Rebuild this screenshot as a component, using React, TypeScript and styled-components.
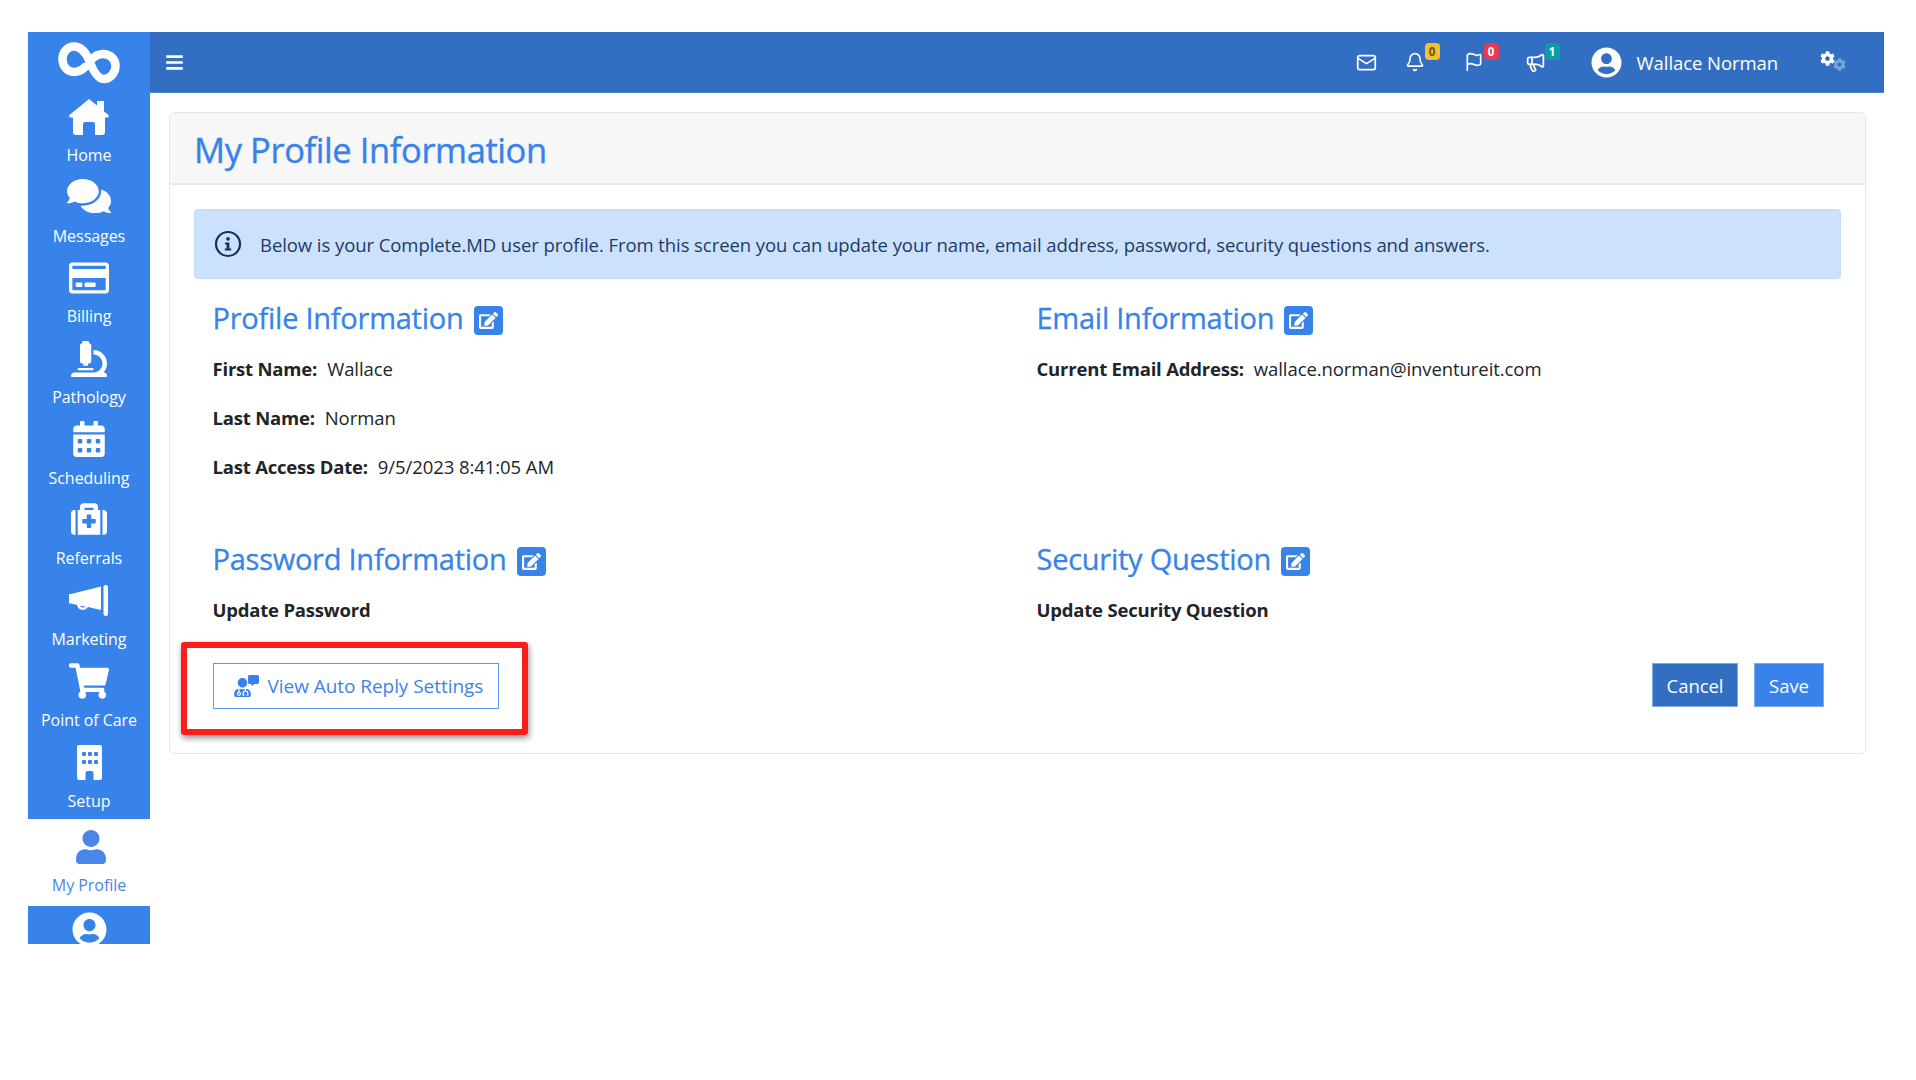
import React from "react";
import styled, { createGlobalStyle } from "styled-components";
import {
  FaComments, FaRegCreditCard, FaMicroscope, FaCalendarAlt, FaMedkit,
  FaShoppingCart, FaUser, FaUserCircle, FaBars, FaCog, FaEdit, FaUserMd, FaCommentAlt,
} from "react-icons/fa";
import { Mail, Bell, Flag, Megaphone } from "lucide-react";

const Global = createGlobalStyle`
  html, body { margin: 0; padding: 0; background: #fff; }
  body { font-family: "Open Sans", "Noto Sans", sans-serif; color: #212529; }
`;

const Page = styled.div`
  display: flex;
  align-items: flex-start;
  padding: 32px 32px 0 28px;
  height: 1080px;
  box-sizing: border-box;
`;
const Sidebar = styled.nav`
  width: 122px;
  flex: none;
  height: 912px;
  overflow: hidden;
  background: #3783e9;
  display: flex;
  flex-direction: column;
`;
const LogoBox = styled.div`
  height: 61px;
  flex: none;
  display: flex;
  align-items: center;
  justify-content: center;
`;
const NavItem = styled.a<{ $active?: boolean }>`
  display: flex;
  flex-direction: column;
  align-items: center;
  flex: none;
  height: ${(p) => (p.$active ? "87px" : "80.7px")};
  box-sizing: border-box;
  padding-top: ${(p) => (p.$active ? "7px" : "3px")};
  background: ${(p) => (p.$active ? "#fff" : "#3783e9")};
  color: ${(p) => (p.$active ? "#4a86e8" : "#fff")};
`;
const NavIcon = styled.span<{ $dx?: number; $lift?: number }>`
  height: 42px;
  display: flex;
  align-items: center;
  justify-content: center;
  margin-left: ${(p) => p.$dx ?? 0}px;
  padding-bottom: ${(p) => p.$lift ?? 0}px;
  box-sizing: border-box;
`;
const NavLabel = styled.span`
  margin-top: 5px;
  font-size: 16px;
  line-height: 24px;
  letter-spacing: -0.05px;
  white-space: nowrap;
`;
const BottomAvatar = styled.div`
  display: flex;
  justify-content: center;
  padding-top: 6px;
  color: #fff;
`;
const Main = styled.div`
  flex: 1;
  min-width: 0;
`;
const TopBar = styled.header`
  height: 61px;
  background: #326fc2;
  border-bottom: 1px solid #4d86d4;
  box-sizing: border-box;
  display: flex;
  align-items: center;
  color: #fff;
  padding: 0 38px 0 15px;
`;
const Burger = styled.span`
  display: flex;
  margin-right: auto;
`;
const TopIcon = styled.span<{ $w: number }>`
  position: relative;
  width: ${(p) => p.$w}px;
  display: flex;
  align-items: center;
`;
const Badge = styled.span<{ $bg: string; $fg: string }>`
  position: absolute;
  left: 20px;
  top: -9px;
  min-width: 15px;
  height: 17px;
  border-radius: 4px;
  background: ${(p) => p.$bg};
  color: ${(p) => p.$fg};
  font-size: 11.5px;
  font-weight: 700;
  line-height: 17px;
  text-align: center;
`;
const UserName = styled.span`
  font-size: 18.5px;
  letter-spacing: -0.07px;
  margin: 0 42px 0 15px;
  white-space: nowrap;
`;
const Gears = styled.span`
  display: flex;
  align-items: flex-start;
  width: 26px;
  height: 22px;
`;
const GearBack = styled.span`
  color: #79a3dc;
  display: flex;
  margin: 7px 0 0 -2px;
`;
const Card = styled.section`
  margin: 19px 0 0 19px;
  width: 1697px;
  height: 642px;
  box-sizing: border-box;
  border: 1px solid #e6e6e6;
  border-radius: 5px;
  display: flex;
  flex-direction: column;
`;
const CardHead = styled.div`
  height: 72px;
  flex: none;
  box-sizing: border-box;
  background: #f7f7f7;
  border-bottom: 2px solid #e9e9e9;
  border-radius: 5px 5px 0 0;
  padding: 2px 0 0 24px;
  display: flex;
  align-items: center;
`;
const Title = styled.h1`
  margin: 0;
  color: #3783e9;
  font-size: 34.5px;
  font-weight: 400;
  letter-spacing: -0.4px;
  -webkit-text-stroke: 0.4px #3783e9;
`;
const CardBody = styled.div`
  padding: 24px 24px 0 24px;
  display: flex;
  flex-direction: column;
  flex: 1;
`;
const Alert = styled.div`
  height: 70px;
  box-sizing: border-box;
  background: #cce2fc;
  border: 1px solid #c2dcfb;
  border-radius: 4px;
  display: flex;
  align-items: center;
  padding: 0 19px;
  gap: 18px;
  color: #1f3a66;
  font-size: 18.5px;
  letter-spacing: -0.07px;
  white-space: nowrap;
`;
const Columns = styled.div`
  display: grid;
  grid-template-columns: 824px 1fr;
  padding: 0 0 0 18.5px;
  margin-top: 17px;
`;
const Block = styled.div<{ $h: number }>`
  height: ${(p) => p.$h}px;
`;
const SectionTitle = styled.h2`
  margin: 0;
  height: 42px;
  display: flex;
  align-items: center;
  gap: 10px;
  color: #3783e9;
  font-size: 29px;
  font-weight: 400;
  letter-spacing: -0.25px;
  -webkit-text-stroke: 0.3px #3783e9;
  white-space: nowrap;
`;
const EditBtn = styled.span`
  width: 29px;
  height: 29px;
  margin-top: 6px;
  border-radius: 4px;
  background: #3783e9;
  color: #fff;
  -webkit-text-stroke: 0;
  display: flex;
  align-items: center;
  justify-content: center;
`;
const Row = styled.p`
  margin: 15px 0 0;
  height: 32px;
  line-height: 32px;
  font-size: 18.5px;
  letter-spacing: -0.07px;
  white-space: nowrap;
  & + & { margin-top: 17px; }
  b { font-weight: 700; margin-right: 10px; letter-spacing: -0.2px; }
`;
const Footer = styled.div`
  display: flex;
  justify-content: space-between;
  align-items: flex-start;
  padding: 1px 17px 0 18.5px;
`;
const Highlighted = styled.div`
  position: relative;
`;
const RedBox = styled.div`
  position: absolute;
  left: -32px;
  top: -21px;
  width: 347px;
  height: 93px;
  box-sizing: border-box;
  border: 6px solid #fb1c1c;
  border-radius: 3px;
  box-shadow: 1px 3px 6px rgba(0, 0, 0, 0.45);
  pointer-events: none;
`;
const AutoReply = styled.button`
  width: 286px;
  height: 46px;
  box-sizing: border-box;
  background: #fff;
  border: 1px solid #5b9bf0;
  color: #3f82e6;
  font: 400 19px "Open Sans", sans-serif;
  letter-spacing: -0.05px;
  display: flex;
  align-items: center;
  gap: 9px;
  padding: 0 0 0 19px;
  white-space: nowrap;
`;
const DocIcon = styled.span`
  position: relative;
  width: 26px;
  height: 22px;
  display: flex;
  align-items: flex-end;
  color: #3783e9;
`;
const Bubble = styled.span`
  position: absolute;
  right: 0;
  top: 0;
  display: flex;
`;
const Actions = styled.div`
  display: flex;
  gap: 16px;
`;
const ActionBtn = styled.button<{ $bg: string; $w: number }>`
  width: ${(p) => p.$w}px;
  height: 44px;
  background: ${(p) => p.$bg};
  color: #fff;
  border: 1px solid #7fa9e8;
  font: 400 18.5px "Open Sans", sans-serif;
  letter-spacing: -0.07px;
`;

const Logo = () => (
  <svg width="62" height="42" viewBox="0 0 62 42" fill="none" stroke="#fff" strokeWidth="8.5" strokeLinecap="round">
    <path d="M27 25 C23 29 20 30 16 30 C9 30 4.5 24 4.5 17 C4.5 10 9.5 4.5 16 4.5 C24 4.5 28 11 31 18 C34 26 39 37 46 37 C52 37 57.5 31 57.5 24 C57.5 17 52 12 45 12 C41 12 37 14 34 17" />
  </svg>
);

const HomeIcon = () => (
  <svg width="40" height="36" viewBox="0 0 40 36" fill="#fff">
    <path d="M20 0 L28 6.5 V2 H35 V12.5 L39.5 16 Q40.5 17.5 39 18.5 H36 V33 Q36 36 33 36 H26 V25 Q26 23 24 23 H16 Q14 23 14 25 V36 H7 Q4 36 4 33 V18.5 H1 Q-0.5 17.5 0.5 16 Z" />
  </svg>
);

const HornIcon = () => (
  <svg width="40" height="32" viewBox="0 0 40 32" fill="#fff">
    <path d="M0 9 L2 9 L32 1.5 V25 L19 22 A6 6 0 0 1 8 20 L2 18.5 H0 Z M11 20.7 A3.4 3.4 0 0 0 16.5 21.4 Z" fillRule="evenodd" />
    <rect x="34.5" y="0" width="4.5" height="31" rx="2.2" />
  </svg>
);

const BuildingIcon = () => (
  <svg width="25" height="35" viewBox="0 0 25 35">
    <path fill="#fff" d="M2 0 H23 Q25 0 25 2 V33 Q25 35 23 35 H16.5 V28 Q16.5 26 14.5 26 H10.5 Q8.5 26 8.5 28 V35 H2 Q0 35 0 33 V2 Q0 0 2 0 Z" />
    {[5, 11, 17].map((x) =>
      [7, 15].map((y) => <rect key={`${x}-${y}`} x={x} y={y} width="4" height="4" rx="1" fill="#3783e9" />)
    )}
  </svg>
);

const InfoIcon = () => (
  <svg width="28" height="28" viewBox="0 0 28 28" fill="none">
    <circle cx="14" cy="14" r="12" stroke="#16305c" strokeWidth="2.2" />
    <circle cx="14" cy="8.8" r="1.9" fill="#16305c" />
    <path d="M11 12.4 H15.4 V18.4 H17.2 V20.4 H10.8 V18.4 H12.6 V14.4 H11 Z" fill="#16305c" />
  </svg>
);

const items = [
  { label: "Home", icon: <HomeIcon />, lift: 1 },
  { label: "Messages", icon: <FaComments size={44} />, lift: 4 },
  { label: "Billing", icon: <FaRegCreditCard size={40} />, lift: 1 },
  { label: "Pathology", icon: <FaMicroscope size={36} />, lift: 1 },
  { label: "Scheduling", icon: <FaCalendarAlt size={36} />, lift: 2 },
  { label: "Referrals", icon: <FaMedkit size={36} />, lift: 2 },
  { label: "Marketing", icon: <HornIcon />, lift: 0 },
  { label: "Point of Care", icon: <FaShoppingCart size={40} />, lift: 2 },
  { label: "Setup", icon: <BuildingIcon />, lift: 1 },
];

const Section = ({ title }: { title: string }) => (
  <SectionTitle>
    {title}
    <EditBtn><FaEdit size={19} /></EditBtn>
  </SectionTitle>
);

export default function App() {
  return (
    <>
      <Global />
      <Page>
        <Sidebar>
          <LogoBox><Logo /></LogoBox>
          {items.map((it) => (
            <NavItem key={it.label}>
              <NavIcon $lift={it.lift}>{it.icon}</NavIcon>
              <NavLabel>{it.label}</NavLabel>
            </NavItem>
          ))}
          <NavItem $active>
            <NavIcon $dx={4}><FaUser size={34} /></NavIcon>
            <NavLabel>My Profile</NavLabel>
          </NavItem>
          <BottomAvatar><FaUserCircle size={35} /></BottomAvatar>
        </Sidebar>
        <Main>
          <TopBar>
            <Burger><FaBars size={19} /></Burger>
            <TopIcon $w={49}><Mail size={21} /></TopIcon>
            <TopIcon $w={59}>
              <Bell size={20} />
              <Badge $bg="#f6c02c" $fg="#6b5312">0</Badge>
            </TopIcon>
            <TopIcon $w={61}>
              <Flag size={20} />
              <Badge $bg="#e7394f" $fg="#fff">0</Badge>
            </TopIcon>
            <TopIcon $w={66}>
              <Megaphone size={21} />
              <Badge $bg="#0d9ca5" $fg="#fff">1</Badge>
            </TopIcon>
            <FaUserCircle size={31} />
            <UserName>Wallace Norman</UserName>
            <Gears>
              <FaCog size={15} />
              <GearBack><FaCog size={13} /></GearBack>
            </Gears>
          </TopBar>
          <Card>
            <CardHead><Title>My Profile Information</Title></CardHead>
            <CardBody>
              <Alert>
                <InfoIcon />
                Below is your Complete.MD user profile. From this screen you can update your name, email address, password, security questions and answers.
              </Alert>
              <Columns>
                <Block $h={241}>
                  <Section title="Profile Information" />
                  <Row><b>First Name:</b>Wallace</Row>
                  <Row><b>Last Name:</b>Norman</Row>
                  <Row><b>Last Access Date:</b>9/5/2023 8:41:05 AM</Row>
                </Block>
                <Block $h={241}>
                  <Section title="Email Information" />
                  <Row><b>Current Email Address:</b>wallace.norman@inventureit.com</Row>
                </Block>
                <Block $h={125}>
                  <Section title="Password Information" />
                  <Row><b>Update Password</b></Row>
                </Block>
                <Block $h={125}>
                  <Section title="Security Question" />
                  <Row><b>Update Security Question</b></Row>
                </Block>
              </Columns>
              <Footer>
                <Highlighted>
                  <AutoReply>
                    <DocIcon>
                      <FaUserMd size={19} />
                      <Bubble><FaCommentAlt size={11} /></Bubble>
                    </DocIcon>
                    View Auto Reply Settings
                  </AutoReply>
                  <RedBox />
                </Highlighted>
                <Actions>
                  <ActionBtn $bg="#326fc2" $w={86}>Cancel</ActionBtn>
                  <ActionBtn $bg="#3783e9" $w={70}>Save</ActionBtn>
                </Actions>
              </Footer>
            </CardBody>
          </Card>
        </Main>
      </Page>
    </>
  );
}
